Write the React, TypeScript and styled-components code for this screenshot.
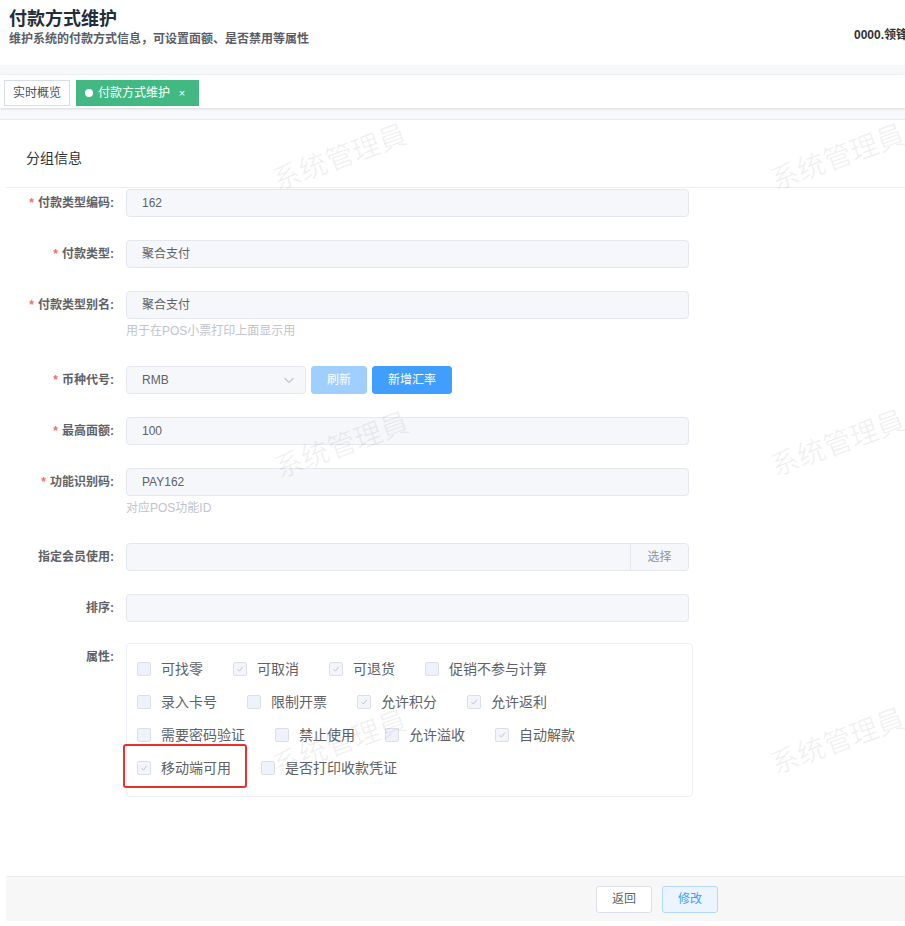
import React from "react";
import styled, { createGlobalStyle } from "styled-components";

const GlobalStyle = createGlobalStyle`
  html, body {
    margin: 0;
    padding: 0;
    background: #fff;
  }
  body {
    font-family: "Liberation Sans", "Noto Sans CJK SC", sans-serif;
    color: #303133;
    overflow: hidden;
  }
`;

type Attr = { label: string; checked: boolean };

const attrRows: Attr[][] = [
  [
    { label: "可找零", checked: false },
    { label: "可取消", checked: true },
    { label: "可退货", checked: true },
    { label: "促销不参与计算", checked: false },
  ],
  [
    { label: "录入卡号", checked: false },
    { label: "限制开票", checked: false },
    { label: "允许积分", checked: true },
    { label: "允许返利", checked: true },
  ],
  [
    { label: "需要密码验证", checked: false },
    { label: "禁止使用", checked: false },
    { label: "允许溢收", checked: false },
    { label: "自动解款", checked: true },
  ],
  [
    { label: "移动端可用", checked: true },
    { label: "是否打印收款凭证", checked: false },
  ],
];

// watermark centres, relative to the content area
const marks = [
  { x: 340, y: 38 },
  { x: 838, y: 38 },
  { x: 342, y: 326 },
  { x: 838, y: 324 },
  { x: 340, y: 624 },
  { x: 838, y: 622 },
];

const App: React.FC = () => {
  return (
    <>
      <GlobalStyle />
      <Page>
        <PageHeader>
          <div>
            <Title>付款方式维护</Title>
            <Subtitle>维护系统的付款方式信息，可设置面额、是否禁用等属性</Subtitle>
          </div>
          <UserName>0000.领锋集团</UserName>
        </PageHeader>
        <Band />
        <TabsBar>
          <Tab>实时概览</Tab>
          <Tab active>
            <TabDot />
            付款方式维护
            <TabClose>×</TabClose>
          </Tab>
        </TabsBar>
        <GapBand />
        <Main>
          <SectionTitle>分组信息</SectionTitle>
          <Form>
            <FormItem>
              <Label required>付款类型编码:</Label>
              <Field>
                <Input>162</Input>
              </Field>
            </FormItem>
            <FormItem>
              <Label required>付款类型:</Label>
              <Field>
                <Input>聚合支付</Input>
              </Field>
            </FormItem>
            <FormItem>
              <Label required>付款类型别名:</Label>
              <Field>
                <Input>聚合支付</Input>
                <Hint>用于在POS小票打印上面显示用</Hint>
              </Field>
            </FormItem>
            <FormItem>
              <Label required>币种代号:</Label>
              <InlineField>
                <Select>
                  RMB
                  <svg width="12" height="12" viewBox="0 0 12 12">
                    <polyline points="1.5,4 6,8.5 10.5,4" fill="none" stroke="#c0c4cc" strokeWidth="1.1" />
                  </svg>
                </Select>
                <Button kind="disabled">刷新</Button>
                <Button kind="primary">新增汇率</Button>
              </InlineField>
            </FormItem>
            <FormItem>
              <Label required>最高面额:</Label>
              <Field>
                <Input>100</Input>
              </Field>
            </FormItem>
            <FormItem>
              <Label required>功能识别码:</Label>
              <Field>
                <Input>PAY162</Input>
                <Hint>对应POS功能ID</Hint>
              </Field>
            </FormItem>
            <FormItem>
              <Label>指定会员使用:</Label>
              <Field>
                <InputGroup>
                  <GroupInput />
                  <Append>选择</Append>
                </InputGroup>
              </Field>
            </FormItem>
            <FormItem tight>
              <Label>排序:</Label>
              <Field>
                <Input />
              </Field>
            </FormItem>
            <FormItem>
              <Label>属性:</Label>
              <AttrBox>
                {attrRows.map((row, i) => (
                  <CheckRow key={i}>
                    {row.map((a) => (
                      <CheckItem key={a.label}>
                        <CheckBox checked={a.checked}>
                          {a.checked && (
                            <svg width="10" height="10" viewBox="0 0 10 10">
                              <polyline
                                points="2.5,5.2 4.4,7.1 7.8,2.8"
                                fill="none"
                                stroke="#c0c4cc"
                                strokeWidth="1"
                              />
                            </svg>
                          )}
                        </CheckBox>
                        {a.label}
                      </CheckItem>
                    ))}
                  </CheckRow>
                ))}
                <Highlight />
              </AttrBox>
            </FormItem>
          </Form>
          <Footer>
            <FooterButton>返回</FooterButton>
            <FooterButton primary>修改</FooterButton>
          </Footer>
          <Watermarks>
            {marks.map((m, i) => (
              <Mark key={i} style={{ left: m.x - 70, top: m.y - 14 }}>
                系统管理員
              </Mark>
            ))}
          </Watermarks>
        </Main>
      </Page>
    </>
  );
};

export default App;

const Page = styled.div`
  width: 905px;
  overflow: hidden;
`;

const PageHeader = styled.div`
  height: 65px;
  box-sizing: border-box;
  padding: 8px 0 0 9px;
  display: flex;
  justify-content: space-between;
  align-items: flex-start;
`;

const Title = styled.div`
  font-size: 18px;
  font-weight: 700;
  line-height: 22px;
  color: #1f2d3d;
`;

const Subtitle = styled.div`
  font-size: 12px;
  font-weight: 700;
  line-height: 18px;
  color: #5a5e66;
`;

const UserName = styled.div`
  margin-top: 18px;
  margin-right: -27px;
  font-size: 12px;
  font-weight: 700;
  line-height: 18px;
  white-space: nowrap;
  color: #303133;
`;

const Band = styled.div`
  height: 10px;
  background: #f7f8fa;
`;

const TabsBar = styled.div`
  height: 33px;
  box-sizing: border-box;
  padding: 5px 0 0 4px;
  display: flex;
  align-items: flex-start;
  gap: 6px;
  background: #fff;
  box-shadow: 0 1px 3px 0 rgba(0, 0, 0, 0.12), 0 0 3px 0 rgba(0, 0, 0, 0.04);
  position: relative;
  z-index: 1;
`;

const Tab = styled.div<{ active?: boolean }>`
  height: 26px;
  box-sizing: border-box;
  line-height: 24px;
  padding: 0 8px;
  display: flex;
  align-items: center;
  font-size: 12px;
  border: 1px solid ${({ active }) => (active ? "#42b983" : "#d8dce5")};
  background: ${({ active }) => (active ? "#42b983" : "#fff")};
  color: ${({ active }) => (active ? "#fff" : "#495060")};
`;

const TabDot = styled.span`
  width: 8px;
  height: 8px;
  border-radius: 50%;
  background: #fff;
  margin-right: 5px;
`;

const TabClose = styled.span`
  width: 16px;
  margin-left: 4px;
  text-align: center;
  font-size: 11px;
`;

const GapBand = styled.div`
  height: 11px;
  background: #f8f9fb;
  border-bottom: 1px solid #e9ecf2;
`;

const Main = styled.div`
  position: relative;
  padding-left: 6px;
`;

const SectionTitle = styled.div`
  height: 68px;
  box-sizing: border-box;
  padding: 28px 20px 0;
  font-size: 14px;
  line-height: 20px;
  color: #303133;
  border-bottom: 1px solid #ebeef5;
`;

const Form = styled.div`
  padding-top: 1px;
  padding-bottom: 1px;
`;

const FormItem = styled.div<{ tight?: boolean }>`
  display: flex;
  align-items: flex-start;
  margin-bottom: ${({ tight }) => (tight ? "21px" : "23px")};
`;

const Label = styled.div<{ required?: boolean }>`
  width: 120px;
  box-sizing: border-box;
  padding-right: 12px;
  text-align: right;
  font-size: 12px;
  font-weight: 700;
  line-height: 28px;
  color: #606266;
  &::before {
    content: ${({ required }) => (required ? '"*"' : "none")};
    color: #f56c6c;
    margin-right: 4px;
  }
`;

const Field = styled.div`
  width: 563px;
  display: flex;
  flex-direction: column;
`;

const InlineField = styled.div`
  display: flex;
  gap: 5px;
`;

const Input = styled.div`
  height: 28px;
  box-sizing: border-box;
  padding: 0 15px;
  line-height: 26px;
  font-size: 12px;
  color: #606266;
  background: #f5f7fa;
  border: 1px solid #e4e7ed;
  border-radius: 4px;
`;

const Hint = styled.div`
  height: 24px;
  line-height: 24px;
  font-size: 12px;
  color: #c0c4cc;
`;

const Select = styled(Input)`
  width: 180px;
  display: flex;
  align-items: center;
  justify-content: space-between;
  padding-right: 10px;
`;

const Button = styled.div<{ kind: "primary" | "disabled" }>`
  height: 28px;
  box-sizing: border-box;
  padding: 0 15px;
  line-height: 26px;
  font-size: 12px;
  color: #fff;
  border-radius: 3px;
  background: ${({ kind }) => (kind === "primary" ? "#409eff" : "#a0cfff")};
  border: 1px solid ${({ kind }) => (kind === "primary" ? "#409eff" : "#a0cfff")};
`;

const InputGroup = styled.div`
  display: flex;
  height: 28px;
  box-sizing: border-box;
  border: 1px solid #e4e7ed;
  border-radius: 4px;
  background: #f5f7fa;
  overflow: hidden;
`;

const GroupInput = styled.div`
  flex: 1;
`;

const Append = styled.div`
  width: 57px;
  border-left: 1px solid #e4e7ed;
  text-align: center;
  line-height: 26px;
  font-size: 12px;
  color: #909399;
`;

const AttrBox = styled.div`
  position: relative;
  width: 567px;
  box-sizing: border-box;
  padding: 8px 10px 12px;
  border: 1px solid #ebeef5;
  border-radius: 4px;
`;

const CheckRow = styled.div`
  height: 33px;
  display: flex;
  align-items: center;
`;

const CheckItem = styled.div`
  display: flex;
  align-items: center;
  margin-right: 30px;
  font-size: 14px;
  line-height: 20px;
  color: #606266;
  white-space: nowrap;
`;

const CheckBox = styled.span<{ checked: boolean }>`
  width: 14px;
  height: 14px;
  box-sizing: border-box;
  margin-right: 10px;
  display: flex;
  align-items: center;
  justify-content: center;
  border: 1px solid #dcdfe6;
  border-radius: 2px;
  background: ${({ checked }) => (checked ? "#f2f6fc" : "#edf2fc")};
`;

const Highlight = styled.div`
  position: absolute;
  left: -4px;
  top: 100px;
  width: 124px;
  height: 44px;
  box-sizing: border-box;
  border: 2px solid #e8322b;
  border-radius: 3px;
`;

const Footer = styled.div`
  margin-top: 55px;
  height: 45px;
  box-sizing: border-box;
  display: flex;
  justify-content: flex-end;
  align-items: center;
  gap: 10px;
  padding-right: 187px;
  background: #f7f7f7;
  border-top: 1px solid #ececec;
`;

const FooterButton = styled.div<{ primary?: boolean }>`
  width: 56px;
  height: 27px;
  box-sizing: border-box;
  text-align: center;
  line-height: 25px;
  font-size: 12px;
  border-radius: 3px;
  border: 1px solid ${({ primary }) => (primary ? "#b3d8ff" : "#dcdfe6")};
  background: ${({ primary }) => (primary ? "#ecf5ff" : "#fff")};
  color: ${({ primary }) => (primary ? "#409eff" : "#606266")};
`;

const Watermarks = styled.div`
  position: absolute;
  inset: 0;
  pointer-events: none;
`;

const Mark = styled.span`
  position: absolute;
  font-size: 28px;
  line-height: 28px;
  white-space: nowrap;
  color: rgba(0, 0, 0, 0.06);
  transform: rotate(-20deg);
`;
